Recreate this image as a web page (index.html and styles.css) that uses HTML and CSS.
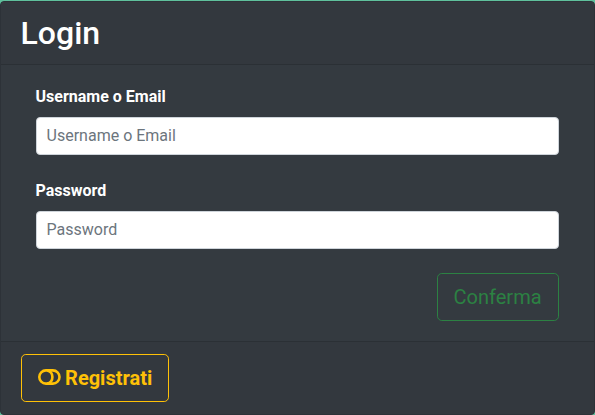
FILE: index.html
```html
<!DOCTYPE html>
<html lang="it">
<head>
<meta charset="utf-8">
<title>Login</title>
<link rel="stylesheet" href="styles.css">
</head>
<body>
<main class="card">
  <header class="card-header"><h2>Login</h2></header>
  <form class="card-body">
    <div class="form-group">
      <label for="user">Username o Email</label>
      <input id="user" type="text" placeholder="Username o Email">
    </div>
    <div class="form-group">
      <label for="pass">Password</label>
      <input id="pass" type="password" placeholder="Password">
    </div>
    <div class="actions"><button class="btn btn-success" type="button" disabled>Conferma</button></div>
  </form>
  <footer class="card-footer">
    <button class="btn btn-warning" type="button">
      <svg class="icon" viewBox="0 0 23 16" fill="none" stroke="currentColor" stroke-width="2.6" aria-hidden="true">
        <rect x="1.3" y="1.4" width="20.2" height="13.2" rx="6.6"/>
        <path d="M9.2 1.4C12.6 2.2 14.4 5 14.4 8S12.6 13.8 9.2 14.6"/>
      </svg>
      <span>Registrati</span>
    </button>
  </footer>
</main>
</body>
</html>
```
FILE: styles.css
```css
* { box-sizing: border-box; }

body {
  margin: 0;
  padding-top: 1px;
  height: 415px;
  overflow: hidden;
  background: #5fc09c;
  color: #fff;
  font: 16px/1.5 Roboto, sans-serif;
}

.card {
  display: flex;
  flex-direction: column;
  width: 595px;
  height: 414px;
  margin-left: -.45px;
  background: #343a40;
  border: 1px solid #2d3238;
  border-radius: 4px;
}

.card-header {
  height: 63px;
  padding: 12px 20px;
  background: #33383e;
  border-bottom: 1px solid #2b3035;
}

h2 {
  margin: 0;
  font-size: 32px;
  font-weight: 500;
  line-height: 1.2;
}

.card-body {
  flex: 1;
  margin: 0;
  padding: 20px 35px;
}

.form-group { margin-bottom: 24px; }

label {
  display: block;
  margin-bottom: 8px;
  font-weight: 700;
}

input {
  display: block;
  width: 100%;
  height: 38px;
  padding: 5px 10px 7px;
  border: 1px solid #ced4da;
  border-radius: 4px;
  background: #fff;
  font: inherit;
}

input::placeholder { color: #6c757d; opacity: 1; }

.actions { display: flex; justify-content: flex-end; }

.btn {
  display: flex;
  align-items: center;
  height: 48px;
  padding: 8px 16px;
  border: 1px solid;
  border-radius: 4.8px;
  background: transparent;
  font: 400 20px/1.5 Roboto, sans-serif;
}

.btn-success { color: #28a745; opacity: .65; }

.btn-warning {
  gap: 4.5px;
  color: #ffc107;
  font-weight: 700;
}

.icon { width: 23px; height: 16px; margin-top: -2px; }

.card-footer {
  padding: 12px 20px;
  background: #33383e;
  border-top: 1px solid #2b3035;
  border-radius: 0 0 3px 3px;
}
```
